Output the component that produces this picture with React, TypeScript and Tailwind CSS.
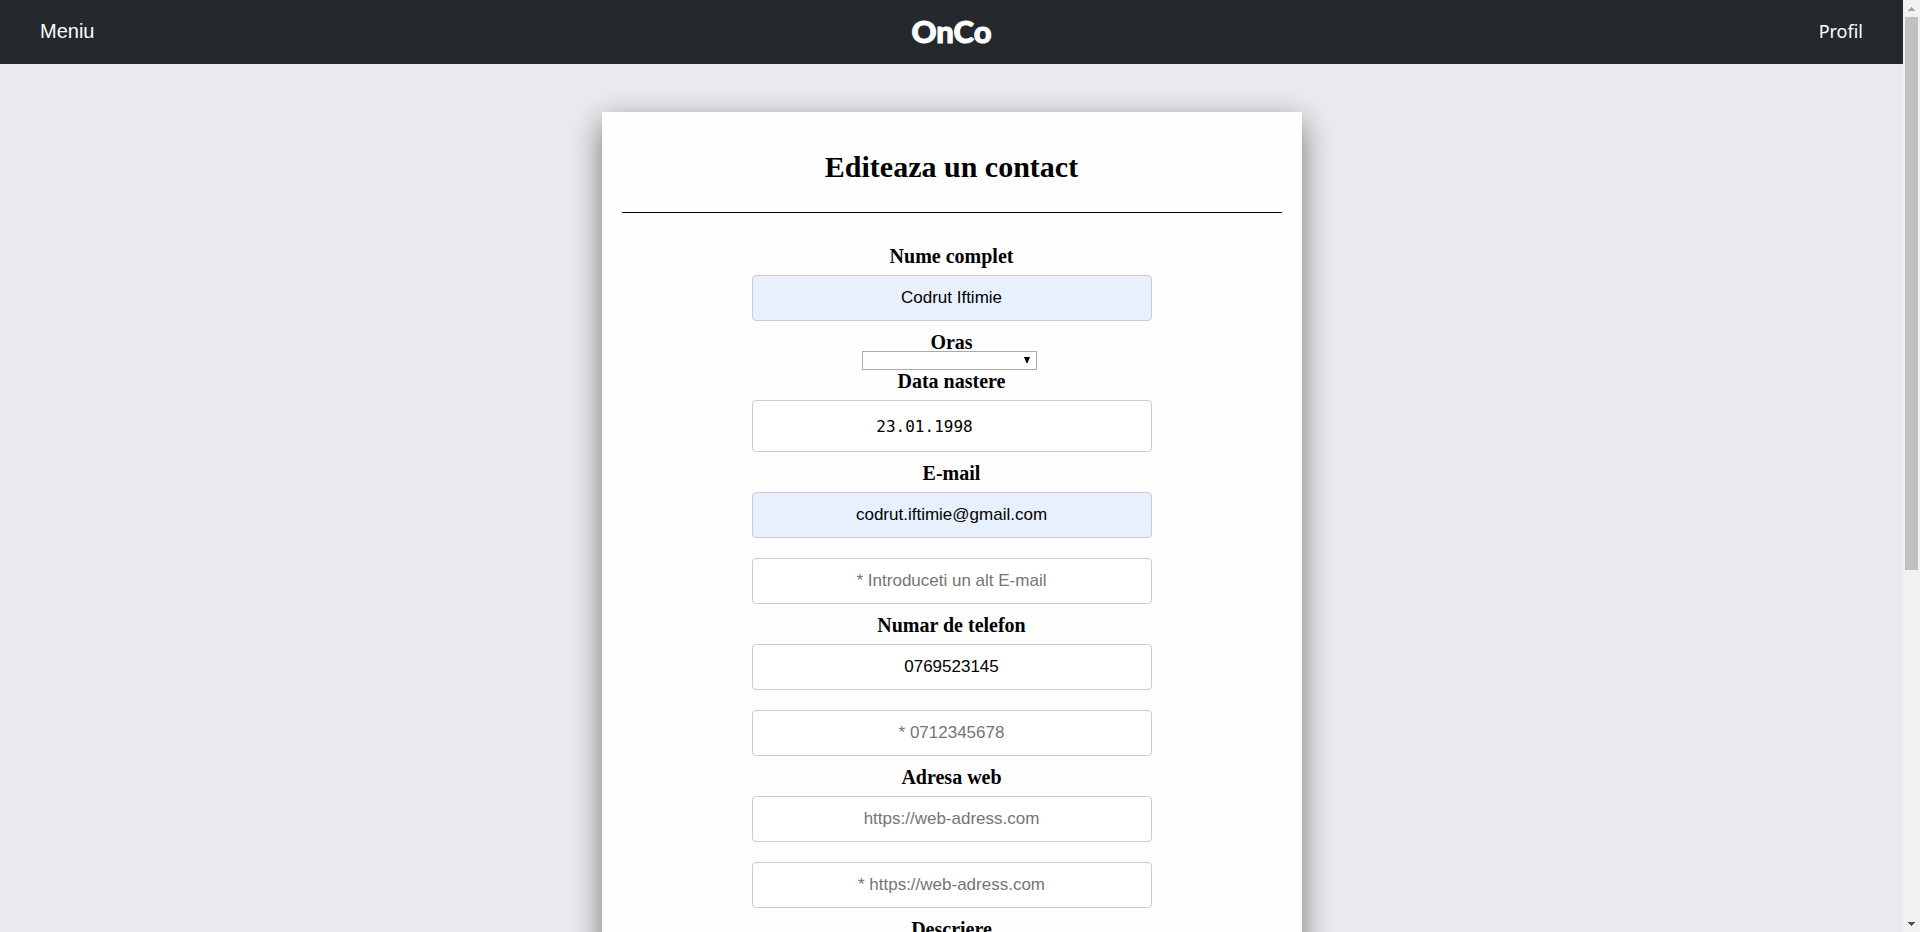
import type { InputHTMLAttributes, ReactNode } from "react";

const fieldBase =
  "my-[10px] block w-full max-w-[400px] rounded border border-[#ccc] text-center text-black placeholder:text-[#757575] placeholder:opacity-100";

function Label({ htmlFor, children }: { htmlFor: string; children: ReactNode }) {
  return (
    <label
      htmlFor={htmlFor}
      className="block h-5 pt-px font-['Liberation_Serif',serif] text-[20px] leading-[20px] font-bold"
    >
      {children}
    </label>
  );
}

function Field({ filled, ...props }: InputHTMLAttributes<HTMLInputElement> & { filled?: boolean }) {
  return (
    <input
      {...props}
      className={`${fieldBase} h-[46px] px-5 font-['Liberation_Sans',Arial,sans-serif] text-[17px] ${
        filled ? "bg-[#e8f0fe]" : "bg-white"
      }`}
    />
  );
}

function Header() {
  return (
    <header className="grid h-16 grid-cols-3 items-center bg-[#24292e] px-10 pb-[2px] text-white">
      <a href="#meniu" className="justify-self-start text-[20px] leading-[26px]">
        Meniu
      </a>
      <a
        href="#acasa"
        className="justify-self-center font-['Lato',sans-serif] text-[31px] leading-[32px] font-black [-webkit-text-stroke:1px_white]"
      >
        OnCo
      </a>
      <a
        href="#profil"
        className="justify-self-end font-['Noto_Sans',sans-serif] text-[18px] leading-[26px]"
      >
        Profil
      </a>
    </header>
  );
}

function ScrollTrack() {
  return (
    <div aria-hidden="true" className="flex w-[17px] shrink-0 flex-col items-center bg-[#f1f1f1]">
      <svg className="h-[17px] w-[17px] shrink-0" viewBox="0 0 17 17" fill="#a3a3a3" shapeRendering="crispEdges">
        <path d="M8 7h1v1h1v1h1v1h1v1H5v-1h1V9h1V8h1z" />
      </svg>
      <div className="min-h-0 w-[13px] flex-[553] bg-[#c1c1c1]" />
      <div className="min-h-0 flex-[345]" />
      <svg className="h-[17px] w-[17px] shrink-0" viewBox="0 0 17 17" fill="#505050" shapeRendering="crispEdges">
        <path d="M5 7h7v1h-1v1h-1v1H9v1H8v-1H7V9H6V8H5z" />
      </svg>
    </div>
  );
}

export default function App() {
  return (
    <div className="flex h-screen font-['Liberation_Sans',Arial,sans-serif] text-black">
      <div className="min-w-0 flex-1 overflow-y-auto bg-[#e9ebee] [scrollbar-width:none]">
        <Header />
        <main className="px-4 py-12">
          <div className="mx-auto max-w-[700px] bg-[#fefefe] p-5 shadow-[0_10px_30px_rgba(0,0,0,0.5)]">
            <h1 className="border-b border-black pt-[17px] pb-[27px] text-center font-['Liberation_Serif',serif] text-[30px] leading-[36px] font-bold">
              Editeaza un contact
            </h1>
            <form className="flex flex-col items-center pt-8">
              <Label htmlFor="nume">Nume complet</Label>
              <Field id="nume" type="text" defaultValue="Codrut Iftimie" filled />

              <Label htmlFor="oras">Oras</Label>
              <div className="relative mr-[5px] h-[19px] w-[175px]">
                <select
                  id="oras"
                  defaultValue=""
                  className="block h-full w-full appearance-none border border-[#a9a9a9] bg-white text-[13px]"
                >
                  <option value="" />
                  <option value="iasi">Iasi</option>
                </select>
                <svg
                  aria-hidden="true"
                  className="pointer-events-none absolute top-[6px] right-[7px] h-[6px] w-[6px]"
                  viewBox="0 0 6 6"
                >
                  <path d="M0 0h6L3.5 6h-1z" />
                </svg>
              </div>

              <Label htmlFor="data">Data nastere</Label>
              <input
                id="data"
                type="text"
                defaultValue="23.01.1998"
                className={`${fieldBase} h-[52px] bg-white pr-[54px] font-['DejaVu_Sans_Mono',monospace] text-[16px]`}
              />

              <Label htmlFor="email">E-mail</Label>
              <Field id="email" type="email" defaultValue="codrut.iftimie@gmail.com" filled />
              <Field type="email" aria-label="Alt E-mail" placeholder="* Introduceti un alt E-mail" />

              <Label htmlFor="telefon">Numar de telefon</Label>
              <Field id="telefon" type="tel" defaultValue="0769523145" />
              <Field type="tel" aria-label="Alt numar de telefon" placeholder="* 0712345678" />

              <Label htmlFor="web">Adresa web</Label>
              <Field id="web" type="url" placeholder="https://web-adress.com" />
              <Field type="url" aria-label="Alta adresa web" placeholder="* https://web-adress.com" />

              <Label htmlFor="descriere">Descriere</Label>
              <textarea id="descriere" rows={5} className={`${fieldBase} bg-white p-3 text-[17px]`} />
            </form>
          </div>
        </main>
      </div>
      <ScrollTrack />
    </div>
  );
}
